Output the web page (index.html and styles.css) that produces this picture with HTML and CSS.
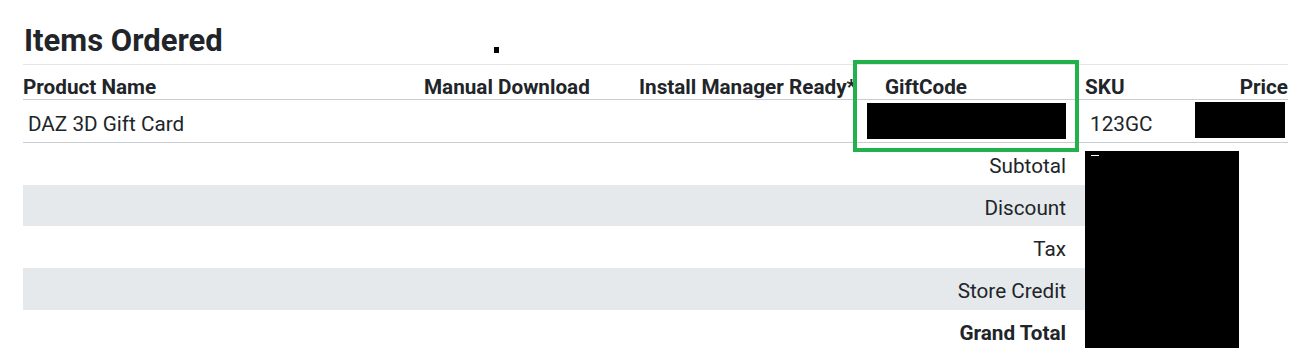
FILE: index.html
```html
<!DOCTYPE html>
<html lang="en">
<head>
<meta charset="utf-8">
<title>Items Ordered</title>
<link rel="stylesheet" href="styles.css">
</head>
<body>
<div class="page">
  <div class="title-bar">
    <h2 class="title">Items Ordered</h2>
    <span class="dot"></span>
  </div>
  <div class="grid head">
    <div class="cell">Product Name</div>
    <div class="cell">Manual Download</div>
    <div class="cell">Install Manager Ready*</div>
    <div class="cell gift-head">GiftCode</div>
    <div class="cell">SKU</div>
    <div class="cell right">Price</div>
  </div>
  <div class="grid item">
    <div class="cell">DAZ 3D Gift Card</div>
    <div class="cell"></div>
    <div class="cell"></div>
    <div class="cell redact-cell"><div class="redact gift"></div></div>
    <div class="cell">123GC</div>
    <div class="cell redact-cell"><div class="redact price"></div></div>
  </div>
  <div class="totals">
    <div class="label">Subtotal</div>
    <div class="label alt">Discount</div>
    <div class="label">Tax</div>
    <div class="label alt">Store Credit</div>
    <div class="label strong">Grand Total</div>
    <div class="redact total"><span class="dash"></span></div>
  </div>
  <div class="highlight"></div>
</div>
</body>
</html>
```
FILE: styles.css
```css
* { box-sizing: border-box; }
html, body { margin: 0; background: #fff; }
body {
  font-family: Roboto, "Liberation Sans", Arial, sans-serif;
  color: #212529;
  width: 1305px;
  height: 364px;
  overflow: hidden;
}
.page {
  position: relative;
  padding: 0 17px 0 23px;
}
.title-bar {
  display: flex;
  align-items: flex-start;
  padding-top: 23px;
  padding-bottom: 5px;
  border-bottom: 1px solid #e3e6e9;
}
.title {
  margin: 0 0 0 1px;
  font-size: 31px;
  line-height: 36px;
  font-weight: 700;
}
.dot {
  width: 5px;
  height: 6px;
  background: #000;
  margin-left: 271px;
  margin-top: 24px;
}
.grid {
  display: grid;
  grid-template-columns: 401px 215px 214px 232px 110px 93px;
  align-items: start;
}
.head {
  border-bottom: 1px solid #c8cdd3;
}
.head .cell {
  font-weight: 700;
  font-size: 20.7px;
  line-height: 24px;
  padding: 10px 0 0 0;
  white-space: nowrap;
}
.head .gift-head { padding-left: 32px; }
.head .right { text-align: right; }
.item {
  height: 43px;
  border-bottom: 1px solid #c8cdd3;
}
.item .cell {
  font-size: 20.7px;
  line-height: 24px;
  padding: 12px 0 0 5px;
}
.item .redact-cell { padding: 0; }
.redact { background: #000; }
.redact.gift {
  width: 199px;
  height: 36px;
  margin: 3px 0 0 14px;
}
.redact.price {
  width: 90px;
  height: 36px;
  margin: 2px 0 0 0;
}
.totals {
  display: grid;
  grid-template-columns: 1062px 154px;
  grid-template-rows: 42px 41px 42px 42px 42px;
}
.label {
  grid-column: 1;
  font-size: 20.7px;
  line-height: 24px;
  padding: 11px 19px 0 0;
  text-align: right;
}
.label.alt { background: #e6e9ec; }
.label.strong { font-weight: 700; }
.redact.total {
  grid-column: 2;
  grid-row: 1 / -1;
  align-self: start;
  height: 197px;
  margin-top: 8px;
  padding: 4px 0 0 6px;
}
.dash {
  display: block;
  width: 8px;
  height: 1px;
  background: #fff;
}
.highlight {
  position: absolute;
  left: 853px;
  top: 60px;
  width: 226px;
  height: 92px;
  border: 4px solid #22b14c;
}
```
